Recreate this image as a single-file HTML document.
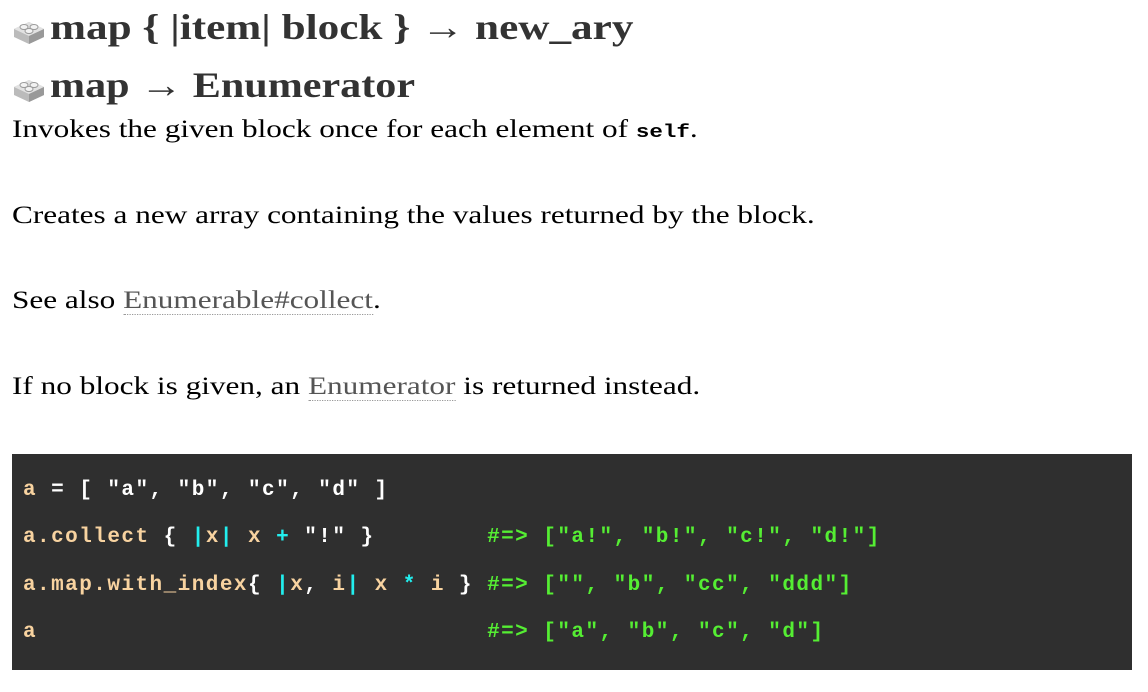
<!DOCTYPE html>
<html><head><meta charset="utf-8"><style>
body{margin:0;background:#fff;width:1148px;height:692px;overflow:hidden;font-family:"Liberation Serif",serif;color:#000}
.h{position:absolute;left:12px;font-weight:bold;font-size:36px;color:#333;white-space:nowrap}
.h svg{vertical-align:-6px;margin-right:4px}
.h span{display:inline-block;transform-origin:left;}
.p{position:absolute;left:12px;font-size:25px;white-space:nowrap;transform:scaleX(1.25);transform-origin:left}
code{font-family:"Liberation Mono",monospace;font-size:18px;font-weight:bold}
a{color:#555;text-decoration:none;border-bottom:1px dotted #999}
pre{position:absolute;left:12px;top:454px;width:1120px;height:216px;margin:0;background:#2f2f2f;font-family:"Liberation Mono",monospace;font-weight:bold;font-size:21px;letter-spacing:1.46px;color:#fff}
.l{position:absolute;left:11px;white-space:pre}
.v{color:#f8d3a0}.c{color:#2ee}.g{color:#5e3}
</style></head><body>
<div class="h" style="top:6px"><svg width="34" height="30" viewBox="0 0 34 30"><path d="M2 14 L17 7 L32 14 L32 22 L17 29 L2 22Z" fill="#bbb"/><path d="M2 14 L17 21 L32 14 L17 7Z" fill="#e2e2e2"/><path d="M17 21 L17 29 L32 22 L32 14Z" fill="#999"/><ellipse cx="12" cy="12" rx="4" ry="2.5" fill="#f2f2f2" stroke="#999"/><ellipse cx="22" cy="12" rx="4" ry="2.5" fill="#f2f2f2" stroke="#999"/><ellipse cx="17" cy="16" rx="4" ry="2.5" fill="#f2f2f2" stroke="#999"/></svg><span style="transform:scaleX(1.2)">map { |item| block } → new_ary</span></div>
<div class="h" style="top:64px"><svg width="34" height="30" viewBox="0 0 34 30"><path d="M2 14 L17 7 L32 14 L32 22 L17 29 L2 22Z" fill="#bbb"/><path d="M2 14 L17 21 L32 14 L17 7Z" fill="#e2e2e2"/><path d="M17 21 L17 29 L32 22 L32 14Z" fill="#999"/><ellipse cx="12" cy="12" rx="4" ry="2.5" fill="#f2f2f2" stroke="#999"/><ellipse cx="22" cy="12" rx="4" ry="2.5" fill="#f2f2f2" stroke="#999"/><ellipse cx="17" cy="16" rx="4" ry="2.5" fill="#f2f2f2" stroke="#999"/></svg><span style="transform:scaleX(1.17)">map → Enumerator</span></div>
<div class="p" style="top:116px">Invokes the given block once for each element of <code>self</code>.</div>
<div class="p" style="top:202px">Creates a new array containing the values returned by the block.</div>
<div class="p" style="top:287px">See also <a>Enumerable#collect</a>.</div>
<div class="p" style="top:373px">If no block is given, an <a>Enumerator</a> is returned instead.</div>
<pre><span class="l" style="top:25px"><span class="v">a</span> = [ "a", "b", "c", "d" ]</span><span class="l" style="top:72px"><span class="v">a.collect</span> { <span class="c">|</span><span class="v">x</span><span class="c">|</span> <span class="v">x</span> <span class="c">+</span> "!" }        <span class="g">#=&gt; ["a!", "b!", "c!", "d!"]</span></span><span class="l" style="top:120px"><span class="v">a.map.with_index</span>{ <span class="c">|</span><span class="v">x</span>, <span class="v">i</span><span class="c">|</span> <span class="v">x</span> <span class="c">*</span> <span class="v">i</span> } <span class="g">#=&gt; ["", "b", "cc", "ddd"]</span></span><span class="l" style="top:167px"><span class="v">a</span>                                <span class="g">#=&gt; ["a", "b", "c", "d"]</span></span></pre>
</body></html>
